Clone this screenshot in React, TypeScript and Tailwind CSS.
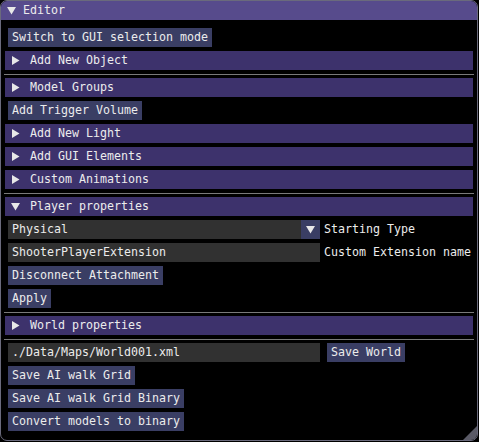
const font = { fontFamily: '"DejaVu Sans Mono", "Liberation Mono", monospace' };

function Arrow({ down = false }: { down?: boolean }) {
  return (
    <svg width="9" height="9" viewBox="0 0 9 9" className="shrink-0">
      {down ? <polygon points="0,1 9,1 4.5,8.5" fill="#e8e8e8" /> : <polygon points="1,0 8.5,4.5 1,9" fill="#e8e8e8" />}
    </svg>
  );
}

function Header({ label, open = false }: { label: string; open?: boolean }) {
  return (
    <div className="-mx-[3px] flex h-[19px] shrink-0 items-center bg-[#3d326c] pl-[6px]">
      <Arrow down={open} />
      <span className="ml-[10px]">{label}</span>
    </div>
  );
}

function Button({ label }: { label: string }) {
  return (
    <div className="flex h-[19px] shrink-0 items-center self-start bg-[#3a3e64] px-[4px]">{label}</div>
  );
}

function Separator() {
  return <div className="-mx-[4px] -mb-px h-px shrink-0 bg-[#7a7a7a]" />;
}

function Input({ value }: { value: string }) {
  return <div className="flex h-[19px] w-[312px] shrink-0 items-center bg-[#313131] px-[4px]">{value}</div>;
}

export default function App() {
  return (
    <div className="h-[442px] w-[479px] whitespace-nowrap bg-[#000] text-[11.63px] text-[#ececec]" style={font}>
      <div className="relative flex h-[441px] w-[478px] flex-col overflow-hidden rounded-[7px] border border-[#6a6a7c] bg-black">
        {/* Title bar */}
        <div className="flex h-[19px] shrink-0 items-center bg-[#574b8c] pl-[6px]">
          <Arrow down />
          <span className="ml-[7px]">Editor</span>
        </div>

        <div className="flex flex-col gap-[4px] px-[7px] pt-[8px]">
          <Button label="Switch to GUI selection mode" />
          <Header label="Add New Object" />
          <Separator />
          <Header label="Model Groups" />
          <Button label="Add Trigger Volume" />
          <Header label="Add New Light" />
          <Header label="Add GUI Elements" />
          <Header label="Custom Animations" />
          <Separator />
          <Header label="Player properties" open />

          <div className="flex h-[19px] items-center gap-[4px]">
            <div className="flex h-[19px] w-[312px] shrink-0 items-center bg-[#313131] pl-[4px]">
              <span className="flex-1">Physical</span>
              <div className="flex h-[19px] w-[19px] items-center justify-center bg-[#3a3e64]">
                <Arrow down />
              </div>
            </div>
            <span>Starting Type</span>
          </div>

          <div className="flex h-[19px] items-center gap-[4px]">
            <Input value="ShooterPlayerExtension" />
            <span>Custom Extension name</span>
          </div>

          <Button label="Disconnect Attachment" />
          <Button label="Apply" />
          <Separator />
          <Header label="World properties" />
          <Separator />

          <div className="flex h-[19px] items-center gap-[7px]">
            <Input value="./Data/Maps/World001.xml" />
            <Button label="Save World" />
          </div>

          <Button label="Save AI walk Grid" />
          <Button label="Save AI walk Grid Binary" />
          <Button label="Convert models to binary" />
        </div>

        {/* Resize grip */}
        <svg width="14" height="14" viewBox="0 0 14 14" className="absolute bottom-0 right-0">
          <polygon points="14,0 14,14 0,14" fill="#5a5a66" />
        </svg>
      </div>
    </div>
  );
}
